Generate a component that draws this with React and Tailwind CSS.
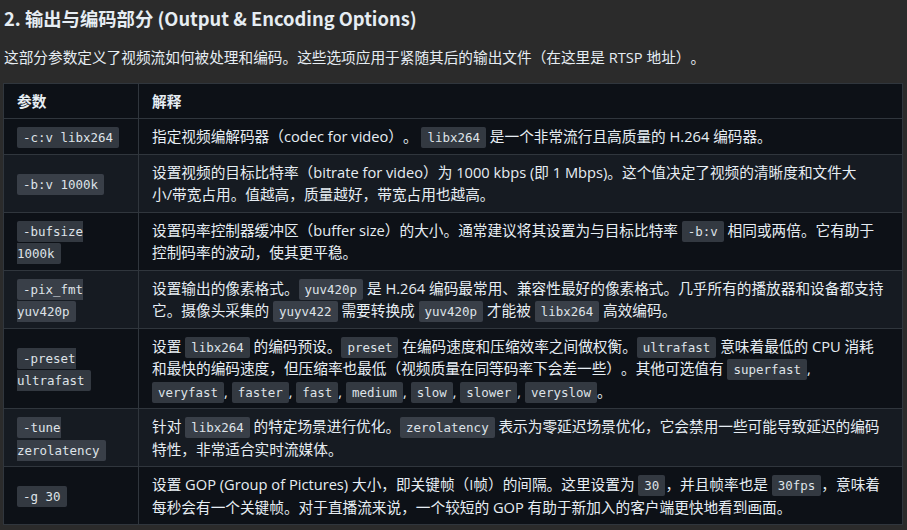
import React from "react";

const C = ({ children }) => (
  <code className="rounded-[2px] bg-[rgba(110,118,129,0.4)] px-[6px] py-[3px] font-['DejaVu_Sans_Mono',monospace] text-[12.47px] leading-none text-[#dfe3e8]">
    {children}
  </code>
);

const rows = [
  [
    <C>-c:v libx264</C>,
    <>指定视频编解码器（codec for video）。 <C>libx264</C> 是一个非常流行且高质量的 H.264 编码器。</>,
  ],
  [
    <C>-b:v 1000k</C>,
    <>设置视频的目标比特率（bitrate for video）为 1000 kbps (即 1 Mbps)。这个值决定了视频的清晰度和文件大<br />小/带宽占用。值越高，质量越好，带宽占用也越高。</>,
  ],
  [
    <C>-bufsize 1000k</C>,
    <>设置码率控制器缓冲区（buffer size）的大小。通常建议将其设置为与目标比特率 <C>-b:v</C> 相同或两倍。它有助于<br />控制码率的波动，使其更平稳。</>,
  ],
  [
    <C>-pix_fmt yuv420p</C>,
    <>设置输出的像素格式。<C>yuv420p</C> 是 H.264 编码最常用、兼容性最好的像素格式。几乎所有的播放器和设备都支持<br />它。摄像头采集的 <C>yuyv422</C> 需要转换成 <C>yuv420p</C> 才能被 <C>libx264</C> 高效编码。</>,
  ],
  [
    <C>-preset ultrafast</C>,
    <>设置 <C>libx264</C> 的编码预设。<C>preset</C> 在编码速度和压缩效率之间做权衡。<C>ultrafast</C> 意味着最低的 CPU 消耗<br />和最快的编码速度，但压缩率也最低（视频质量在同等码率下会差一些）。其他可选值有 <C>superfast</C>,<br /><C>veryfast</C>, <C>faster</C>, <C>fast</C>, <C>medium</C>, <C>slow</C>, <C>slower</C>, <C>veryslow</C>。</>,
  ],
  [
    <C>-tune zerolatency</C>,
    <>针对 <C>libx264</C> 的特定场景进行优化。<C>zerolatency</C> 表示为零延迟场景优化，它会禁用一些可能导致延迟的编码<br />特性，非常适合实时流媒体。</>,
  ],
  [
    <C>-g 30</C>,
    <>设置 GOP (Group of Pictures) 大小，即关键帧（I帧）的间隔。这里设置为 <C>30</C>，并且帧率也是 <C>30fps</C>，意味着<br />每秒会有一个关键帧。对于直播流来说，一个较短的 GOP 有助于新加入的客户端更快地看到画面。</>,
  ],
];

export default function App() {
  return (
    <div className="h-[530px] w-[907px] overflow-hidden bg-[#2b2b2b] px-[3px] font-['Open_Sans','Noto_Sans_CJK_SC',sans-serif] text-[14.67px] leading-[22.5px] text-[#e6edf3] [text-spacing-trim:space-all]">
      <h2 className="pt-[7px] pl-px font-['Noto_Sans_CJK_SC',sans-serif] text-[18.33px] font-bold leading-[23px]">
        2. 输出与编码部分 (Output &amp; Encoding Options)
      </h2>
      <p className="mt-[16px] pl-px">
        这部分参数定义了视频流如何被处理和编码。这些选项应用于紧随其后的输出文件（在这里是 RTSP 地址）。
      </p>
      <table className="mt-[14px] w-[900px] table-fixed border-collapse">
        <colgroup>
          <col className="w-[135px]" />
          <col />
        </colgroup>
        <thead>
          <tr className="bg-[#0d1117]">
            <th className="border border-[#30363d] px-[13px] py-[6px] text-left font-bold">参数</th>
            <th className="border border-[#30363d] px-[13px] py-[6px] text-left font-bold">解释</th>
          </tr>
        </thead>
        <tbody>
          {rows.map(([a, b], i) => (
            <tr key={i} className={i % 2 === 1 ? "bg-[#161b22]" : "bg-[#0d1117]"}>
              <td className="border border-[#30363d] px-[13px] py-[6px] align-middle">{a}</td>
              <td className="border border-[#30363d] px-[13px] py-[6px] align-middle">{b}</td>
            </tr>
          ))}
        </tbody>
      </table>
    </div>
  );
}
